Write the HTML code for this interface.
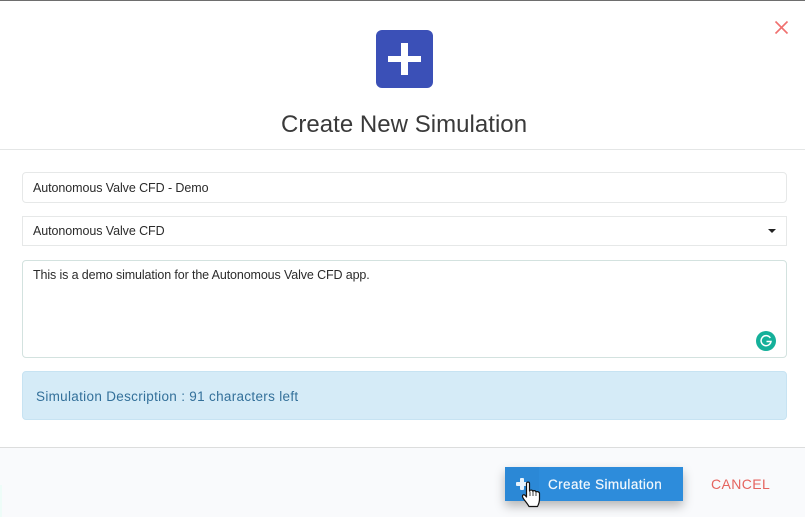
<!DOCTYPE html>
<html><head><meta charset="utf-8"><style>
html,body{margin:0;padding:0}
body{width:805px;height:517px;overflow:hidden;position:relative;background:#fff;font-family:"Liberation Sans",sans-serif}
div,span{position:absolute;box-sizing:border-box}
.t{white-space:nowrap;color:#2b2b2b;font-size:12.5px;line-height:16px}
.f{left:22px;width:765px;background:#fff;border:1px solid #e6e8e8}
</style></head><body>
<div style="left:0;top:0;width:805px;height:1px;background:#6e6e6e"></div>
<svg style="position:absolute;left:774px;top:20px" width="15" height="15" viewBox="0 0 15 15"><path d="M1.5 1.5L13.5 13.5M13.5 1.5L1.500 13.5" stroke="#f0706f" stroke-width="1.6" fill="none"/></svg>
<div style="left:376px;top:30px;width:57px;height:58px;background:#3b50b7;border-radius:6px"></div>
<div style="left:388px;top:56px;width:33px;height:6px;background:#fff"></div>
<div style="left:401px;top:43px;width:7px;height:32px;background:#fff"></div>
<div class="t" style="left:281px;top:110px;font-size:24px;line-height:30px;letter-spacing:.03px;color:#3a3a3a">Create New Simulation</div>
<div style="left:0;top:149px;width:805px;height:1px;background:#e4e6e6"></div>

<div class="f" style="top:172px;height:31px;border-radius:4px"></div>
<div class="t" style="left:33px;top:180px;letter-spacing:-.08px">Autonomous Valve CFD - Demo</div>
<div class="f" style="top:216px;height:30px"></div>
<div class="t" style="left:33px;top:223px;letter-spacing:-.08px">Autonomous Valve CFD</div>
<svg style="position:absolute;left:768px;top:229px" width="8" height="4" viewBox="0 0 8 4"><path d="M0 0H8L4 4Z" fill="#222"/></svg>
<div class="f" style="top:260px;height:98px;border-radius:4px;border-color:#d3e2df"></div>
<div class="t" style="left:33px;top:267px;letter-spacing:-.12px">This is a demo simulation for the Autonomous Valve CFD app.</div>
<svg style="position:absolute;left:756px;top:331px" width="20" height="20" viewBox="0 0 20 20"><circle cx="10" cy="10" r="10" fill="#15b09a"/><path d="M14.3 7A5 5 0 1 0 15 10.5H10.5" stroke="#fff" stroke-width="1.5" fill="none"/></svg>

<div style="left:22px;top:371px;width:765px;height:49px;background:#d5ebf7;border:1px solid #c7e3f2;border-radius:4px"></div>
<div class="t" style="left:36px;top:389px;font-size:13.5px;letter-spacing:.31px;color:#33709a">Simulation Description : 91 characters left</div>

<div style="left:0;top:447px;width:805px;height:70px;background:#f9fafc;border-top:1px solid #dcdddd"></div>
<div style="left:0;top:485px;width:2px;height:32px;background:#eefcf8"></div>

<div style="left:505px;top:467px;width:178px;height:34px;background:#2d8cdb;box-shadow:0 5px 10px rgba(0,0,0,.28)"></div>
<div style="left:505px;top:467px;width:34px;height:34px;background:#2b88d6"></div>
<div style="left:516px;top:482px;width:12px;height:4px;background:#e8f3fc;border-radius:1px"></div>
<div style="left:520px;top:478px;width:4px;height:12px;background:#e8f3fc;border-radius:1px"></div>
<div class="t" style="left:548px;top:477px;font-size:13.5px;letter-spacing:.4px;color:#f2f8fd;-webkit-text-stroke:.2px #f2f8fd">Create Simulation</div>
<svg style="position:absolute;left:521px;top:481px" width="21" height="27" viewBox="0 0 21 27"><path d="M5.500 2.500C5.500 .6 8.500 .6 8.500 2.500V10C9 8.700 11.500 8.700 11.800 10.300C12.200 9.300 14.500 9.300 15 11C15.500 10.300 18.500 10.500 18.500 12.500V18C18.500 21.500 17.500 23.500 16.500 25.500H8C7 23.500 5 21 3 18.500C1.200 16 1 14.800 2 14C3 13.300 4.300 14.300 5.500 16Z" fill="#fff" stroke="#111" stroke-width="1.200" stroke-linejoin="round"/><path d="M9 10.500V15M12 10.500V15M15 11.500V15" stroke="#111" stroke-width=".8"/></svg>
<div class="t" style="left:711px;top:476px;font-size:14px;letter-spacing:.4px;color:#e5645f">CANCEL</div>
</body></html>
